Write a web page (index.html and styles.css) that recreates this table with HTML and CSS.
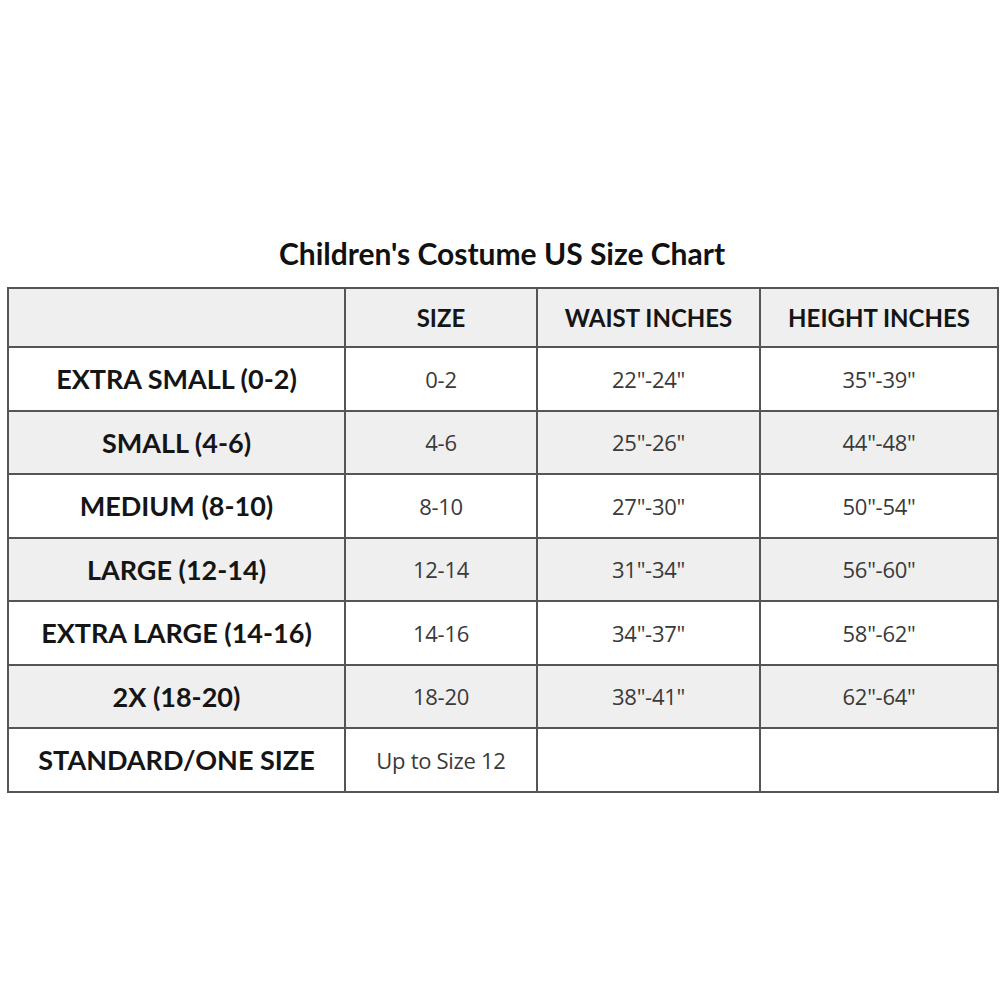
FILE: index.html
```html
<!DOCTYPE html>
<html>
<head>
<meta charset="utf-8">
<link rel="stylesheet" href="styles.css">
</head>
<body>
<div class="page">
  <h1 class="title">Children's Costume US Size Chart</h1>
  <table class="chart">
    <colgroup>
      <col class="c1"><col class="c2"><col class="c3"><col class="c4">
    </colgroup>
    <thead>
      <tr class="head"><th></th><th>SIZE</th><th>WAIST INCHES</th><th>HEIGHT INCHES</th></tr>
    </thead>
    <tbody>
      <tr><th>EXTRA SMALL (0-2)</th><td>0-2</td><td>22"-24"</td><td>35"-39"</td></tr>
      <tr class="alt"><th>SMALL (4-6)</th><td>4-6</td><td>25"-26"</td><td>44"-48"</td></tr>
      <tr><th>MEDIUM (8-10)</th><td>8-10</td><td>27"-30"</td><td>50"-54"</td></tr>
      <tr class="alt"><th>LARGE (12-14)</th><td>12-14</td><td>31"-34"</td><td>56"-60"</td></tr>
      <tr><th>EXTRA LARGE (14-16)</th><td>14-16</td><td>34"-37"</td><td>58"-62"</td></tr>
      <tr class="alt"><th>2X (18-20)</th><td>18-20</td><td>38"-41"</td><td>62"-64"</td></tr>
      <tr><th>STANDARD/ONE SIZE</th><td>Up to Size 12</td><td></td><td></td></tr>
    </tbody>
  </table>
</div>
</body>
</html>
```
FILE: styles.css
```css
html, body {
  margin: 0;
  padding: 0;
  background: #ffffff;
}
.page {
  width: 990px;
  margin-left: 7px;
  padding-top: 235px;
  font-family: Lato, "Open Sans", sans-serif;
}
.title {
  margin: 0 0 16px 0;
  text-align: center;
  font-size: 30px;
  font-weight: 700;
  color: #111;
  line-height: 36px;
}
.chart {
  width: 990px;
  border-collapse: collapse;
  table-layout: fixed;
  border: 2px solid #555;
}
.c1 { width: 337px; }
.c2 { width: 192px; }
.c3 { width: 223px; }
.c4 { width: 238px; }
.chart th, .chart td {
  border: 2px solid #555;
  text-align: center;
  padding: 0;
  height: 61.5px;
}
.chart th {
  font-weight: 700;
  font-size: 27px;
  color: #151515;
}
.chart td {
  font-family: "Open Sans", sans-serif;
  font-size: 22px;
  color: #3a3a3a;
  letter-spacing: -0.3px;
}
.head th {
  height: 57px;
  font-size: 24px;
}
.head, .alt {
  background: #efefef;
}
```
